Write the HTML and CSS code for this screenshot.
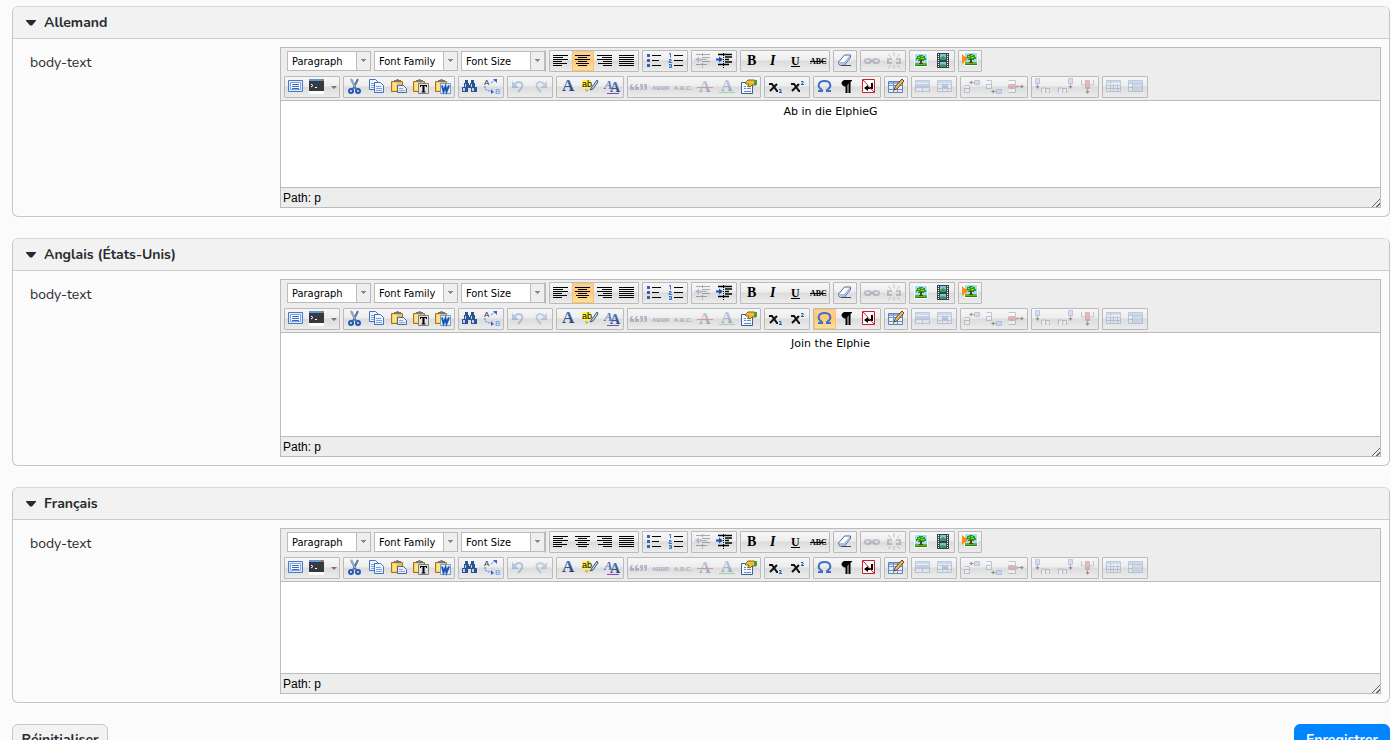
FILE: index.html
```html
<!DOCTYPE html>
<html lang="fr">
<head>
    <meta charset="UTF-8">
    <meta name="viewport" content="width=device-width, initial-scale=1.0">
    <title>body-text</title>
    <link rel="stylesheet" href="styles.css">
</head>
<body>
    <svg class="sprite" aria-hidden="true">
        <defs>
            <linearGradient id="letter" x1="0" y1="0" x2="0" y2="1"><stop offset="0" stop-color="#5c86c8"/><stop offset="1" stop-color="#152f66"/></linearGradient>
            <g id="page"><path d="M.5.5h6l3 3v7h-9z" fill="#eef4ff" stroke="#4672b8"/><path d="M2 4.5h5M2 6.5h6M2 8.5h6" stroke="#7ba2dc"/></g>
            <g id="board"><path d="M2.500 4.500h11v10h-11z" fill="#f0c04c" stroke="#a2731c"/><path d="M3.500 5.500h4v8h-4z" fill="#ffe389"/><path d="M5 5V3h2l1-1h1l1 1h2v2z" fill="#6e7684"/></g>
            <g id="tree"><path d="M2 2h14v14H2z" fill="#fff"/><path d="M3 3h12v9H3z" fill="#9fdcfa"/><path d="M3 12h12v3H3z" fill="#5cb82a"/><path d="M3 14h12v1H3z" fill="#238017"/><path d="M8 9h2v4H8zM7 12h4v1H7z" fill="#6e360c"/><path d="M4 9V7h1V5h2V4h4v1h2v2h1v2h-2v1h-2V9H8v1H6V9z" fill="#2f961c"/><path d="M6 6h2v1H6zM9 5h2v1H9zM9 7h3v1H9zM5 8h2v1H5z" fill="#8bdc3f"/></g>
            <g id="cells"><path d="M2.500 3.500h14v11h-14z" fill="#e5eefb" stroke="#5f82bb"/><path d="M3 4h13v2H3z" fill="#8fb0e2"/></g>
        </defs>

        <symbol id="left" viewBox="0 0 20 20"><path d="M1 4.500h15M1 6.500h10M1 8.500h15M1 10.500h9M1 12.500h14M1 14.500h9" stroke="#000"/></symbol>
        <symbol id="center" viewBox="0 0 20 20"><path d="M1 4.500h15M4 6.500h9M1 8.500h15M4 10.500h9M2 12.500h13M4 14.500h9" stroke="#000"/></symbol>
        <symbol id="right" viewBox="0 0 20 20"><path d="M1 4.500h15M6 6.500h10M1 8.500h15M7 10.500h9M2 12.500h14M7 14.500h9" stroke="#000"/></symbol>
        <symbol id="full" viewBox="0 0 20 20"><path d="M1 4.500h15M1 6.500h15M1 8.500h15M1 10.500h15M1 12.500h15M1 14.500h15" stroke="#000"/></symbol>
        <symbol id="bullist" viewBox="0 0 20 20"><path d="M7 4.500h9M7 9.500h7M7 14.500h9" stroke="#000"/><path d="M2 3h3v3H2zM2 8h3v3H2zM2 13h3v3H2z" fill="#3b62a8"/></symbol>
        <symbol id="numlist" viewBox="0 0 20 20"><path d="M7 4.500h9M7 9.500h9M7 14.500h9" stroke="#000"/><path d="M2 2.500h1.500v4M2 8.500h2v1.500h-2v1.500h3M2 13.500h2.500v3h-2.500M2 15h2" fill="none" stroke="#3973d0"/></symbol>
        <symbol id="outdent" viewBox="0 0 20 20"><path d="M2 3.500h14M9 6.500h7M9 8.500h4M9 10.500h7M2 13.500h11" stroke="#222"/><path d="M8.500 2v16" stroke="#222" stroke-dasharray="1 1"/><path d="M1 8.500l4-3v2h3v2H5v2z" fill="#2d62bd"/></symbol>
        <symbol id="indent" viewBox="0 0 20 20"><path d="M2 3.500h14M9 6h7M9 8.500h4M9 11h7M2 13.500h11" stroke="#000" stroke-width="1.500"/><path d="M7.500 2v16" stroke="#000" stroke-dasharray="1 1"/><path d="M7 8.500l-4-3v2H0v2h3v2z" fill="#1747d0"/></symbol>
        <symbol id="underline" viewBox="0 0 20 20"><path d="M4 15.500h9" stroke="#000"/></symbol>
        <symbol id="strike" viewBox="0 0 20 20"><path d="M1 10.500h16" stroke="#000"/></symbol>
        <symbol id="eraser" viewBox="0 0 20 20"><path d="M2.500 11l6-7h6v2.500l-6 7.500h-5z" fill="#fff" stroke="#4d6898"/><path d="M3 11h5l6-7v2.500l-6 7.500H4z" fill="#a9bfe3"/><path d="M5 14.500h10" stroke="#3d4a60"/></symbol>
        <symbol id="link" viewBox="0 0 20 20"><g fill="none" stroke="#66718a" stroke-width="2"><rect x="2" y="8" width="6" height="4" rx="2"/><rect x="10" y="8" width="6" height="4" rx="2"/><path d="M6 10h6"/></g></symbol>
        <symbol id="unlink" viewBox="0 0 20 20"><g fill="none" stroke="#66718a" stroke-width="2"><path d="M7 8H3v4h4M11 8h4v4h-4"/></g><path d="M9 1v4M9 14v4M3 3l3 3M15 3l-3 3M3 17l3-3M15 17l-3-3" stroke="#66718a"/></symbol>
        <symbol id="image" viewBox="0 0 20 20"><use href="#tree"/></symbol>
        <symbol id="media" viewBox="0 0 20 20"><path d="M3 2h12v15H3z" fill="#39434c"/><path d="M6 3h6v6H6zM6 11h6v5H6z" fill="#78c2df"/><path d="M6 7l3-2 3 2v2H6zM6 14l3-1 3 1v2H6z" fill="#3e9853"/><path d="M4.500 3v14M13.500 3v14" stroke="#fff" stroke-dasharray="1 1"/></symbol>
        <symbol id="insert" viewBox="0 0 20 20"><use href="#tree" x="1" y="-1"/><path d="M1 3l6 5-6 5z" fill="#ff8c14"/></symbol>

        <symbol id="fullscreen" viewBox="0 0 20 20"><path d="M1.500 3.500h14v11h-14z" fill="#dceaff" stroke="#4b78c4"/><path d="M3.500 5.500h10v7h-10z" fill="#fff" stroke="#7fa5e4"/><path d="M5 7.500h7M5 9.500h7M5 11.500h7" stroke="#3b69bd"/></symbol>
        <symbol id="source" viewBox="0 0 20 20"><path d="M0 3h15v11H0z" fill="#343a40"/><path d="M0 2h15v2H0z" fill="#5c9bd6"/><path d="M12 2h2v2h-2z" fill="#e6572d"/><path d="M2 7l2 1.500L2 10M6 10.500h2" fill="none" stroke="#fff"/><path d="M0 14h15v3H0z" fill="#fff"/></symbol>
        <symbol id="cut" viewBox="0 0 20 20"><path d="M5 2l5 10M12 2L7 12" stroke="#55779d" stroke-width="2"/><path d="M5 2l4 8" stroke="#b7cade"/><g fill="none" stroke="#2459b2" stroke-width="2"><circle cx="5" cy="14" r="2"/><circle cx="12" cy="14" r="2"/></g></symbol>
        <symbol id="copy" viewBox="0 0 20 20"><use href="#page" x="1" y="2"/><use href="#page" x="6" y="5"/></symbol>
        <symbol id="paste" viewBox="0 0 20 20"><use href="#board" x="-1"/><path d="M7.500 8.500h6l3 3v4h-9z" fill="#e8eefb" stroke="#50668f"/><path d="M9 11.500h4M9 13.500h6" stroke="#8ba5d3"/></symbol>
        <symbol id="pastetext" viewBox="0 0 20 20"><use href="#board" x="-1"/><path d="M6.500 6.500h10v10h-10z" fill="#e1e1e1" stroke="#7d7d7d"/><path d="M8 8h7v2h-1V9h-1.500v5.500h1v1h-4v-1h1V9H9v1H8z"/></symbol>
        <symbol id="pasteword" viewBox="0 0 20 20"><use href="#board" x="-1"/><path d="M6.500 6.500h10v10h-10z" fill="#e4eeff" stroke="#7d9bcc"/><path d="M8 8.500l1.500 6 2-5 1 5 2.500-6" fill="none" stroke="#1c55ae" stroke-width="2"/></symbol>
        <symbol id="find" viewBox="0 0 20 20"><path d="M4 3h3v3H4zM10 3h3v3h-3zM3 6h5v4H3zM9 6h5v4H9zM1 10h6v5H1zM10 10h6v5h-6zM7 8h3v3H7z" fill="#2c538f"/><path d="M4 7h1v3H4zM10 7h1v3h-1zM2 11h2v3H2zM11 11h2v3h-2z" fill="#b8d4f5"/></symbol>
        <symbol id="replace" viewBox="0 0 20 20"><path d="M2 9v3l4 2h3M8 6l4-3" fill="none" stroke="#4979df" stroke-dasharray="2 1"/><path d="M8 12l3 3-3 2zM10 2h4v4z" fill="#3566d5"/></symbol>
        <symbol id="undo" viewBox="0 0 20 20"><path d="M4 8c4-5 10-3 8 2-1 2-2 3-4 5" fill="none" stroke="#4477c5" stroke-width="2"/><path d="M2 4v7h7z" fill="#4477c5"/></symbol>
        <symbol id="redo" viewBox="0 0 20 20"><path d="M13 8c-4-5-10-3-8 2 1 2 2 3 4 5" fill="none" stroke="#6a91c7" stroke-width="2"/><path d="M15 4v7H8z" fill="#6a91c7"/></symbol>
        <symbol id="highlight" viewBox="0 0 20 20"><path d="M16 3l-5 7-2 3 3-1 5-7z" fill="#c9d8ed" stroke="#405775"/><path d="M4 12l4 1-3 2z" fill="#d5b600"/></symbol>
        <symbol id="attribs" viewBox="0 0 20 20"><path d="M4 16.500h12" stroke="#8348c6"/></symbol>
        <symbol id="cite" viewBox="0 0 20 20"><path d="M3 7h2v1H4v2h2v3H2V8h1zM8 7h2v1H9v2h2v3H7V8h1zM12 7h3v5h-1v1h-2v-1h1v-2h-1zM16 7h3v5h-1v1h-2v-1h1v-2h-1z" fill="#4a6695" transform="translate(-2 0)"/></symbol>
        <symbol id="del" viewBox="0 0 20 20"><path d="M1 10.500h16" stroke="#e01818"/></symbol>
        <symbol id="ins" viewBox="0 0 20 20"><path d="M1 15.500h16" stroke="#10b81e"/></symbol>
        <symbol id="props" viewBox="0 0 20 20"><path d="M1.500 5.500h11v11h-11z" fill="#f4f8ff" stroke="#405f98"/><path d="M4 9.500h2M7 9.500h4M4 11.500h2M7 11.500h4M4 14.500h7" stroke="#668acb"/><path d="M5 6l3-3h6l2 1v4h-4l-2 2-2-1 1-2H6z" fill="#ecc035" stroke="#8b6414"/><path d="M14 3h3v5h-3z" fill="#4d9d3c"/></symbol>
        <symbol id="sub" viewBox="0 0 20 20"><path d="M2 7h3l5 7h1M10 7L3 14" fill="none" stroke="#111" stroke-width="2"/><path d="M12 12.500h2v1.500l-2 1.500h3" fill="none" stroke="#2c5eb2"/></symbol>
        <symbol id="sup" viewBox="0 0 20 20"><path d="M2 7h3l5 7h1M10 7L3 14" fill="none" stroke="#111" stroke-width="2"/><path d="M12 4.500h2v1.500l-2 1.500h3" fill="none" stroke="#2c5eb2"/></symbol>
        <symbol id="charmap" viewBox="0 0 20 20"><path d="M2 14h4v-1c-3-2-4-4-3-6 1-4 10-4 11 0 1 2 0 4-3 6v1h4" fill="none" stroke="#3c6fc5" stroke-width="2"/></symbol>
        <symbol id="para" viewBox="0 0 20 20"><path d="M14 3.500H7C3 3.500 3 9 7 9h1" stroke="#000"/><path d="M8.500 3v13M11.500 3v13" stroke="#000" stroke-width="2"/></symbol>
        <symbol id="nonbreak" viewBox="0 0 20 20"><path d="M2.500 2.500h12v13h-12z" fill="#fff" stroke="#c71e2a"/><path d="M12 6v5H7" fill="none" stroke="#000" stroke-width="2"/><path d="M4 11l4-3v6z"/><path d="M3 3l11 12" stroke="#d51f2c"/></symbol>
        <symbol id="table" viewBox="0 0 20 20"><use href="#cells" x="-1" y="1"/><path d="M2 8.500h13M2 12.500h13M6.500 5v10M10.500 5v10" stroke="#7094cc"/><path d="M15 2l2 2-7 8-3 1 1-3z" fill="#f3b557" stroke="#63482b"/></symbol>
        <symbol id="rowprops" viewBox="0 0 20 20"><use href="#cells" x="-1"/><path d="M1 7h15v4H1z" fill="#7298d4"/><path d="M8.500 11v4" stroke="#5f82bb"/></symbol>
        <symbol id="cellprops" viewBox="0 0 20 20"><use href="#cells" x="-1"/><path d="M2 7.500h13M2 11.500h13M6.500 6v9M11.500 6v9" stroke="#7094cc"/><path d="M6 7h6v4H6z" fill="#5b87cf"/></symbol>
        <symbol id="rowbefore" viewBox="0 0 20 20"><path d="M1.500 8.500h5v3h-5M1.500 11.500h5v4h-5z" fill="#fff" stroke="#65738b"/><path d="M11.500 3.500h5v4h-5z" fill="#9abced" stroke="#537bb9"/><path d="M11 5.500H8" stroke="#222"/><path d="M6 5.500l3-2v4z"/></symbol>
        <symbol id="rowafter" viewBox="0 0 20 20"><path d="M1.500 3.500h5v4h-5v4h5v-4" fill="#fff" stroke="#65738b"/><path d="M11.500 12.500h5v4h-5z" fill="#9abced" stroke="#537bb9"/><path d="M11 14.500H8" stroke="#222"/><path d="M6 14.500l3-2v4z"/></symbol>
        <symbol id="delrow" viewBox="0 0 20 20"><path d="M1.500 3.500h7v4h-7M1.500 11.500h7v4h-7" fill="#fff" stroke="#65738b"/><path d="M1 8h10v3H1z" fill="#d65050"/><path d="M11 9.500h5" stroke="#222"/><path d="M17 9.500l-3-2v4z"/></symbol>
        <symbol id="colbefore" viewBox="0 0 20 20"><path d="M1.500 1.500h4v5h-4z" fill="#9abced" stroke="#537bb9"/><path d="M7.500 16v-5h4v5M11.500 11.500h4V16" fill="#fff" stroke="#65738b"/><path d="M3.500 7v3" stroke="#222"/><path d="M3.500 12l-2-3h4z"/></symbol>
        <symbol id="colafter" viewBox="0 0 20 20"><path d="M12.500 1.500h4v5h-4z" fill="#9abced" stroke="#537bb9"/><path d="M2.500 16v-5h4v5M6.500 11.500h4V16" fill="#fff" stroke="#65738b"/><path d="M14.500 7v3" stroke="#222"/><path d="M14.500 12l-2-3h4z"/></symbol>
        <symbol id="delcol" viewBox="0 0 20 20"><path d="M3.500 3v5h4M15.500 3v5h-4" fill="none" stroke="#65738b"/><path d="M7.500 3.500h4v8h-4z" fill="#d65050" stroke="#9f4e55"/><path d="M9.500 12v3" stroke="#222"/><path d="M9.500 17l-2-3h4z"/></symbol>
        <symbol id="split" viewBox="0 0 20 20"><use href="#cells" x="-1"/><path d="M2 8.500h13M2 11.500h13M5.500 4v10M8.500 7v7M12.500 7v7" stroke="#5f82bb"/></symbol>
        <symbol id="merge" viewBox="0 0 20 20"><use href="#cells" x="-1"/><path d="M6 7h9v7H6z" fill="#9bbbea"/><path d="M2 6.500h13M5.500 4v10M2 10.500h3" stroke="#5f82bb"/></symbol>
    </svg>

    <form class="page">
        <details class="panel" open>
            <summary>Allemand</summary>
            <div class="field">
                <label for="text-de">body-text</label>
                <div class="editor">
                    <div class="toolbar"></div>
                    <textarea id="text-de" class="short">Ab in die ElphieG</textarea>
                    <div class="status">Path: <a href="#text-de">p</a></div>
                </div>
            </div>
        </details>
        <details class="panel" open>
            <summary>Anglais (États-Unis)</summary>
            <div class="field">
                <label for="text-en">body-text</label>
                <div class="editor" data-hover="charmap">
                    <div class="toolbar"></div>
                    <textarea id="text-en" class="tall">Join the Elphie</textarea>
                    <div class="status">Path: <a href="#text-en">p</a></div>
                </div>
            </div>
        </details>
        <details class="panel" open>
            <summary>Français</summary>
            <div class="field">
                <label for="text-fr">body-text</label>
                <div class="editor">
                    <div class="toolbar"></div>
                    <textarea id="text-fr" class="medium"></textarea>
                    <div class="status">Path: <a href="#text-fr">p</a></div>
                </div>
            </div>
        </details>
        <div class="actions">
            <button type="reset" class="btn">Réinitialiser</button>
            <button type="submit" class="btn primary">Enregistrer</button>
        </div>
    </form>

    <script src="script.js"></script>
</body>
</html>
```

FILE: styles.css
```css
* { margin: 0; padding: 0; box-sizing: border-box; }
html { scrollbar-width: none; }
body {
    background-color: #fbfbfb;
    color: #272b30;
    font: 14px/20px Nunito, "Noto Sans", sans-serif;
}
.sprite { position: absolute; width: 0; height: 0; }
.page { padding: 6px 1px 12px 12px; }

.panel {
    margin-bottom: 21px;
    border: 1px solid #c6c6c6;
    border-top-color: #d8d8d8;
    border-radius: 6px;
}
.panel summary {
    display: flex;
    align-items: center;
    gap: 8px;
    height: 32px;
    padding-left: 13px;
    background-color: #f2f2f2;
    border-bottom: 1px solid #ccc;
    border-radius: 5px 5px 0 0;
    font-weight: 700;
    cursor: pointer;
}
.panel summary::before {
    content: "";
    width: 10px; height: 6px;
    background-color: #272b30;
    clip-path: polygon(0 0, 100% 0, 100% 20%, 60% 100%, 40% 100%, 0 20%);
}
.field {
    display: grid;
    grid-template-columns: 250px minmax(0, 1fr);
    padding: 8px 8px 8px 17px;
}
.field label { padding-top: 6px; }

.editor {
    border: 1px solid #bbb;
    background-color: #ededed;
}
.toolbar {
    display: flex;
    flex-direction: column;
    gap: 4px;
    padding: 2px 3px;
    border-bottom: 1px solid #bbb;
}
.row { display: flex; gap: 3px; }
.lists {
    display: flex;
    gap: 3px;
    align-items: center;
    padding-left: 3px;
    border-right: 1px solid #bbb;
}
.list { position: relative; }
.list select {
    display: block;
    appearance: none;
    width: 84px; height: 20px;
    padding: 2px 16px 0 4px;
    background-color: #fff;
    border: 1px solid #bbb;
    border-radius: 0;
    color: #000;
    font: 11px/16px Tahoma, "DejaVu Sans Condensed", sans-serif;
}
.list::after {
    content: "";
    position: absolute;
    top: 1px; right: 1px;
    width: 13px; height: 18px;
    background:
        linear-gradient(#888, #888) no-repeat 4px 7px / 5px 1px,
        linear-gradient(#888, #888) no-repeat 5px 8px / 3px 1px,
        linear-gradient(#888, #888) no-repeat 6px 9px / 1px 1px,
        #eee;
    border-left: 1px solid #bbb;
    pointer-events: none;
}
.group {
    display: flex;
    height: 22px;
    border: 1px solid #bbb;
    border-radius: 1px;
    background: linear-gradient(#f7f7f7, #ededed 45%, #dcdcdc 50%, #ececec);
}
.tool {
    display: flex;
    justify-content: flex-end;
    width: 22px; height: 20px;
    border: 0;
    background: none;
}
.tool svg { width: 20px; height: 20px; }
.tool:disabled svg { opacity: .35; }
.tool.on {
    background: linear-gradient(#fdd3a0, #fcc67a 45%, #ffe49a);
    box-shadow: inset 0 0 0 1px #fbc56d;
}
.tool.more {
    justify-content: center;
    align-items: center;
    width: 10px;
}
.tool.more::before {
    content: "";
    border: 3px solid transparent;
    border-top-color: #777;
    border-bottom: 0;
}
.serif { font-family: "Liberation Serif", serif; }
.sans { font-family: "Liberation Sans", sans-serif; }
.heavy { font-weight: bold; }
.slanted { font-style: italic; }

textarea {
    display: block;
    width: 100%;
    padding: 4px 8px;
    border: 0;
    background-color: #fff;
    color: #000;
    font: 11px/13px Verdana, "DejaVu Sans", sans-serif;
    text-align: center;
    resize: none;
}
.short { height: 86px; }
.medium { height: 91px; }
.tall { height: 103px; }
.status {
    height: 20px;
    padding-left: 2px;
    border-top: 1px solid #bbb;
    color: #000;
    font: 12px/20px "Liberation Sans", sans-serif;
}
.status a { color: #000; text-decoration: none; }
.status::after {
    content: "";
    float: right;
    width: 11px; height: 11px;
    margin-top: 8px;
    background: repeating-linear-gradient(315deg, #ededed 0 2px, #666 2px 3px);
    clip-path: polygon(100% 0, 100% 100%, 0 100%);
}

.actions { display: flex; justify-content: space-between; }
.btn {
    min-width: 96px; height: 32px;
    border: 1px solid #c6c6c6;
    border-radius: 6px;
    background-color: #f2f2f2;
    color: #272b30;
    font: 700 14px/20px Nunito, "Noto Sans", sans-serif;
}
.primary { background-color: #0085ff; border-color: #0085ff; color: #fff; }
```

FILE: script.js
```javascript
// "-" marks a disabled tool
const row1 = [
    ['left', 'center', 'right', 'full'],
    ['bullist', 'numlist'],
    ['-outdent', 'indent'],
    ['bold', 'italic', 'underline', 'strike'],
    ['eraser'],
    ['-link', '-unlink'],
    ['image', 'media'],
    ['insert']
]
const row2 = [
    ['fullscreen', 'source', 'more'],
    ['cut', 'copy', 'paste', 'pastetext', 'pasteword'],
    ['find', 'replace'],
    ['-undo', '-redo'],
    ['styleprops', 'highlight', 'attribs'],
    ['-cite', '-abbr', '-acronym', '-del', '-ins', 'props'],
    ['sub', 'sup'],
    ['charmap', 'para', 'nonbreak'],
    ['table'],
    ['-rowprops', '-cellprops'],
    ['-rowbefore', '-rowafter', '-delrow'],
    ['-colbefore', '-colafter', '-delcol'],
    ['-split', '-merge']
]
const lists = ['Paragraph', 'Font Family', 'Font Size']

// letters that sit under the drawn part of an icon
const letters = {
    bold: '<text x="4" y="14" class="serif heavy" font-size="14">B</text>',
    italic: '<text x="5" y="14" class="serif heavy slanted" font-size="14">I</text>',
    underline: '<text x="4" y="14" class="serif heavy" font-size="12">U</text>',
    strike: '<text x="1" y="13" class="serif heavy" font-size="8">ABC</text>',
    replace: '<text x="1" y="8" class="sans" font-size="8" fill="#1c365e">A</text><text x="12" y="17" class="sans" font-size="8" fill="#5c8ff0">B</text>',
    styleprops: '<text x="3" y="14" class="serif heavy" font-size="17" fill="url(#letter)">A</text>',
    highlight: '<path d="M1 3h9v8H1z" fill="#fff04a"/><text x="1" y="10" class="sans" font-size="9">ab</text>',
    attribs: '<text x="1" y="12" class="serif heavy slanted" font-size="13" fill="#5075bd">A</text><text x="7" y="15" class="serif heavy" font-size="14" fill="url(#letter)">A</text>',
    abbr: '<text x="0" y="13" class="sans heavy" font-size="6" fill="#35507f">ABBR</text>',
    acronym: '<text x="0" y="13" class="sans heavy" font-size="6" fill="#35507f">A.B.C.</text>',
    del: '<text x="3" y="15" class="serif heavy" font-size="16" fill="url(#letter)">A</text>',
    ins: '<text x="3" y="14" class="serif heavy" font-size="16" fill="url(#letter)">A</text>'
}

function tool(item, on) {
    const name = item.replace('-', '')
    if (name == 'more') return `<button type="button" class="tool more" aria-label="more"></button>`
    const cls = on.includes(name) ? 'tool on' : 'tool'
    const off = item[0] == '-' ? 'disabled' : ''
    return `<button type="button" class="${cls}" aria-label="${name}" ${off}><svg>${letters[name] || ''}<use href="#${name}"/></svg></button>`
}

function groups(row, on) {
    return row.map(g => `<div class="group">${g.map(t => tool(t, on)).join('')}</div>`).join('')
}

document.querySelectorAll('.editor').forEach(editor => {
    const on = [editor.dataset.hover]
    if (editor.querySelector('textarea').value) on.push('center')
    const selects = lists.map(l => `<div class="list"><select aria-label="${l}"><option>${l}</option></select></div>`).join('')
    editor.querySelector('.toolbar').innerHTML =
        `<div class="row"><div class="lists">${selects}</div>${groups(row1, on)}</div>
        <div class="row">${groups(row2, on)}</div>`
})
```
